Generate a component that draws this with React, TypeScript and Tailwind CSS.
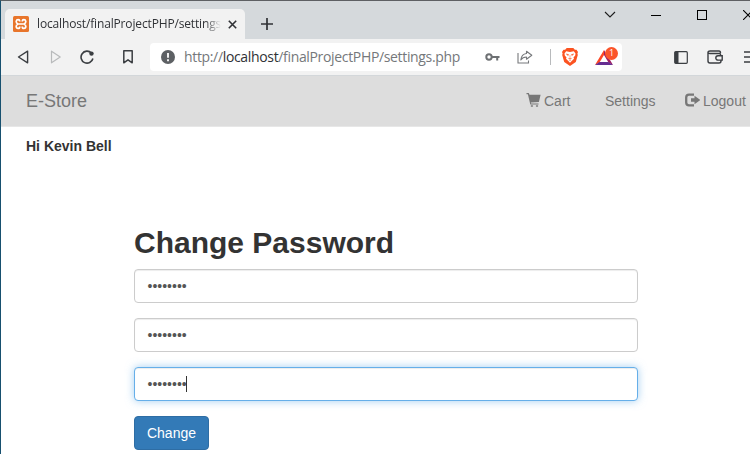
import React from "react";

function TabStrip() {
  return (
    <div className="flex h-[38px] items-start bg-[#d5d9dc]">
      <div className="ml-1 mt-2 flex h-[30px] w-[240px] shrink-0 items-center rounded-t-[5px] bg-[#f2f2f2] pl-2">
        <svg width="16" height="16" viewBox="0 0 16 16" className="shrink-0">
          <rect width="16" height="16" rx="1.5" fill="#e8752b" />
          <path d="M6.700 5.500V5q0-1.300-1.600-1.300T3.200 5.400Q3.200 7 4.800 8 3.200 9 3.200 10.600q0 1.700 1.900 1.700t1.600-1.300v-.5M9.300 5.500V5q0-1.300 1.600-1.300t1.900 1.700Q12.800 7 11.200 8q1.600 1 1.600 2.600 0 1.700-1.900 1.700t-1.600-1.300v-.5M5 8h6" fill="none" stroke="#fff" strokeWidth="1.700" strokeLinejoin="round" />
        </svg>
        <div className="ml-2 w-[184px] shrink-0 overflow-hidden whitespace-nowrap text-[12px] leading-[18px] tracking-[-0.15px] text-[#303236] [mask-image:linear-gradient(to_right,black_168px,transparent_184px)]">
          localhost/finalProjectPHP/settings
        </div>
        <svg width="9" height="9" viewBox="0 0 9 9" className="ml-[7px] shrink-0">
          <path d="M.8.8l7.400 7.400M8.200.8L.8 8.200" stroke="#303236" strokeWidth="1.6" />
        </svg>
      </div>
      <svg width="12" height="12" viewBox="0 0 12 12" className="ml-4 mt-[17px] shrink-0">
        <path d="M6 0v12M0 6h12" stroke="#303236" strokeWidth="1.7" />
      </svg>
      <svg width="12" height="8" viewBox="0 0 12 8" className="ml-[331px] mt-[10px] shrink-0">
        <path d="M1 1l5 5 5-5" fill="none" stroke="#1d1d1d" strokeWidth="1.1" />
      </svg>
      <svg width="10" height="1" className="ml-[35px] mt-[14px] shrink-0">
        <rect width="10" height="1" fill="#000" />
      </svg>
      <div className="ml-9 mt-[9px] size-[10px] shrink-0 border border-black" />
      <svg width="10" height="10" viewBox="0 0 10 10" className="ml-9 mt-[9px] shrink-0">
        <path d="M0 0l10 10M10 0L0 10" stroke="#000" strokeWidth="1.1" />
      </svg>
    </div>
  );
}

function AddressBar() {
  return (
    <div className="flex h-7 w-[472px] shrink-0 items-center rounded-[4px] bg-white pl-[11px]">
      <svg width="14" height="14" viewBox="0 0 14 14" className="shrink-0">
        <circle cx="7" cy="7" r="7" fill="#5d6064" />
        <path d="M7 3v4.800M7 9.300v1.900" stroke="#fff" strokeWidth="1.8" />
      </svg>
      <div className="ml-[9px] w-[301px] shrink-0 whitespace-nowrap text-[14px] leading-5 tracking-[-0.34px] text-[#75787b]">
        http://<span className="text-[#303236]">localhost</span>/finalProjectPHP/settings.php
      </div>
      <svg width="15" height="10" viewBox="0 0 15 10" className="shrink-0">
        <circle cx="4" cy="5" r="2.700" fill="none" stroke="#6d7073" strokeWidth="2" />
        <path d="M7 5h7.500M12.200 5v3.500" stroke="#6d7073" strokeWidth="2" />
      </svg>
      <svg width="16" height="14" viewBox="0 0 16 14" className="ml-[17px] shrink-0" fill="none" stroke="#77797c" strokeWidth="1.100">
        <path d="M1 3v10h10.500v-2.500" />
        <path d="M9.500 1.200L14.800 5.200 9.500 9.200V7C6.500 7 5 8 3.800 10 4.200 6.500 6.200 3.900 9.500 3.500z" strokeLinejoin="round" />
      </svg>
      <div className="ml-[17px] h-4 w-px bg-[#b8babc]" />
      <svg width="16" height="18" viewBox="0 0 16 18" className="ml-[11px] shrink-0">
        <path d="M4.700 0h6.600l1.600 1.800 1.600-.1L16 4l-.6 1.500.4 1.500-2 7.100L8 18l-5.800-3.900L.2 7l.4-1.500L0 4l1.500-2.300 1.600.1z" fill="#fb5321" />
        <path d="M4.200 3.300L8 4l3.800-.7 1.700 2.200-.3 2-1.700 1.900.5 1.400-1.800 1.600L8 14.700l-2.200-2.300L4 10.800l.5-1.400-1.700-1.900-.3-2z" fill="#fff" />
        <path d="M4.300 6l2.300.6-.5 1zm7.400 0l-2.300.6.5 1zM8 7.200v3M6.300 10.300l1.700.7 1.700-.7M6.900 12.300L8 11.900l1.100.4" fill="#fb5321" stroke="#fb5321" strokeWidth=".5" />
      </svg>
      <div className="relative ml-[17px] h-[17px] w-[23px] shrink-0">
        <svg width="18" height="16" viewBox="0 0 18 16" className="mt-px">
          <path d="M9 0L0 15l4.500-2.500L9 5z" fill="#ff4724" />
          <path d="M9 0l9 15-4.500-2.500L9 5z" fill="#9e1f63" />
          <path d="M0 15h18l-4.500-3h-9z" fill="#662d91" />
        </svg>
        <div className="absolute -top-[2px] left-[10px] flex size-[13px] items-center justify-center rounded-full bg-[#fb542b] text-[9px] leading-3 text-white">1</div>
      </div>
    </div>
  );
}

function Toolbar() {
  return (
    <div className="flex h-9 items-center bg-[#f2f2f2]">
      <svg width="12" height="14" viewBox="0 0 12 14" className="ml-4 shrink-0">
        <path d="M10.600 1.200v11.600L1.500 7z" fill="none" stroke="#3b3e42" strokeWidth="1.400" strokeLinejoin="round" />
      </svg>
      <svg width="12" height="14" viewBox="0 0 12 14" className="ml-[21px] shrink-0">
        <path d="M1.500 1.200v11.600L10.200 7z" fill="none" stroke="#b8babb" strokeWidth="1.200" strokeLinejoin="round" />
      </svg>
      <svg width="15" height="14" viewBox="0 0 15 14" className="ml-[18px] shrink-0">
        <path d="M11.400 3A6 6 0 1 0 12.900 8.500" fill="none" stroke="#3b3e42" strokeWidth="1.600" />
        <circle cx="11.500" cy="3.600" r="2.200" fill="#3b3e42" />
      </svg>
      <svg width="10" height="14" viewBox="0 0 10 14" className="ml-[28px] shrink-0">
        <path d="M.8.800h8.400v12L5 9.800.8 12.800z" fill="none" stroke="#3b3e42" strokeWidth="1.500" strokeLinejoin="round" />
      </svg>
      <div className="w-[17px] shrink-0" />
      <AddressBar />
      <svg width="14" height="13" viewBox="0 0 14 13" className="ml-[52px] shrink-0">
        <rect x=".700" y=".700" width="12.600" height="11.600" rx="1" fill="none" stroke="#3b3e42" strokeWidth="1.200" />
        <path d="M1 1h3.500v11H1z" fill="#3b3e42" />
      </svg>
      <svg width="16" height="14" viewBox="0 0 16 14" className="ml-[19px] shrink-0" fill="none" stroke="#3b3e42" strokeWidth="1.400">
        <path d="M13.500 5.500V4.500q0-1-1-1H3Q1 3.500 1 2.200 1 1 3 1h9q1.500 0 1.500 2M1 2.200V11q0 2 2 2h9q2 0 2-2v-1" />
        <path d="M15.200 5.700h-4.200a2.200 2.200 0 0 0 0 4.400h4.200z" />
      </svg>
      <svg width="16" height="12" viewBox="0 0 16 12" className="ml-[21px] shrink-0">
        <path d="M0 1h16M0 6h16M0 11h16" stroke="#3b3e42" strokeWidth="1.400" />
      </svg>
    </div>
  );
}

function Navbar() {
  return (
    <nav className="flex h-[51px] items-center border-b border-[#e7e7e7] bg-[#dddddd] text-[14px] leading-5 text-[#777]">
      <div className="ml-[25px] w-[500px] shrink-0 text-[18px]">E-Store</div>
      <div className="flex w-[79px] shrink-0 items-center">
        <svg width="15" height="14" viewBox="0 0 15 14" className="mb-[2px] mr-[3px] shrink-0" fill="#777">
          <path d="M.5 0h2.300l.7 1.700h11.100l-1.700 7.200-8.100.6.400.9h7.300v1.200H4.300L1.900 1.200H.5z" />
          <rect x="4.700" y="12.200" width="2.400" height="1.500" rx=".700" />
          <rect x="9.800" y="12.200" width="2.400" height="1.500" rx=".700" />
        </svg>
        Cart
      </div>
      <div className="w-20 shrink-0">Settings</div>
      <div className="flex shrink-0 items-center">
        <svg width="15" height="14" viewBox="0 0 15 14" className="mb-[2px] mr-[3px] shrink-0">
          <path d="M9 1.700H4Q1.200 1.700 1.200 4.500v5q0 2.800 2.800 2.800h5" fill="none" stroke="#777" strokeWidth="2.300" />
          <path d="M6 5.300H9.500V2.800L15.200 7 9.500 11.200V8.700H6z" fill="#777" />
        </svg>
        Logout
      </div>
    </nav>
  );
}

function PasswordField({ focused = false }: { focused?: boolean }) {
  return (
    <div
      className={
        focused
          ? "mb-[15px] flex h-[34px] items-center rounded-[4px] border border-[#66afe9] bg-white px-3 shadow-[inset_0_1px_1px_rgba(0,0,0,0.075),0_0_8px_rgba(102,175,233,0.6)]"
          : "mb-[15px] flex h-[34px] items-center rounded-[4px] border border-[#ccc] bg-white px-3 shadow-[inset_0_1px_1px_rgba(0,0,0,0.075)]"
      }
    >
      <span className="w-[39px] pl-[0.5px] text-[14px] leading-5 text-[#555]">••••••••</span>
      {focused && <span className="h-4 w-px bg-[#333]" />}
    </div>
  );
}

export default function App() {
  return (
    <div className="h-[454px] w-[750px] overflow-hidden border-l border-t border-l-[#17506f] border-t-[#5e6063] bg-white">
      <div className="font-['Open_Sans','Noto_Sans',sans-serif]">
        <TabStrip />
        <Toolbar />
        <div className="h-px bg-[#d3d7da]" />
      </div>
      <div className="font-['Liberation_Sans',Arial,sans-serif]">
        <Navbar />
        <p className="ml-[25px] mt-[9px] text-[14px] font-bold leading-5 text-[#333]">Hi Kevin Bell</p>
        <form className="ml-[133px] mt-[70px] w-[504px]">
          <h1 className="mb-[10px] text-[30px] font-bold leading-[33px] text-[#333]">Change Password</h1>
          <PasswordField />
          <PasswordField />
          <PasswordField focused />
          <button type="button" className="h-[34px] w-[75px] rounded-[4px] border border-[#2e6da4] bg-[#337ab7] text-[14px] leading-5 text-white">
            Change
          </button>
        </form>
      </div>
    </div>
  );
}
